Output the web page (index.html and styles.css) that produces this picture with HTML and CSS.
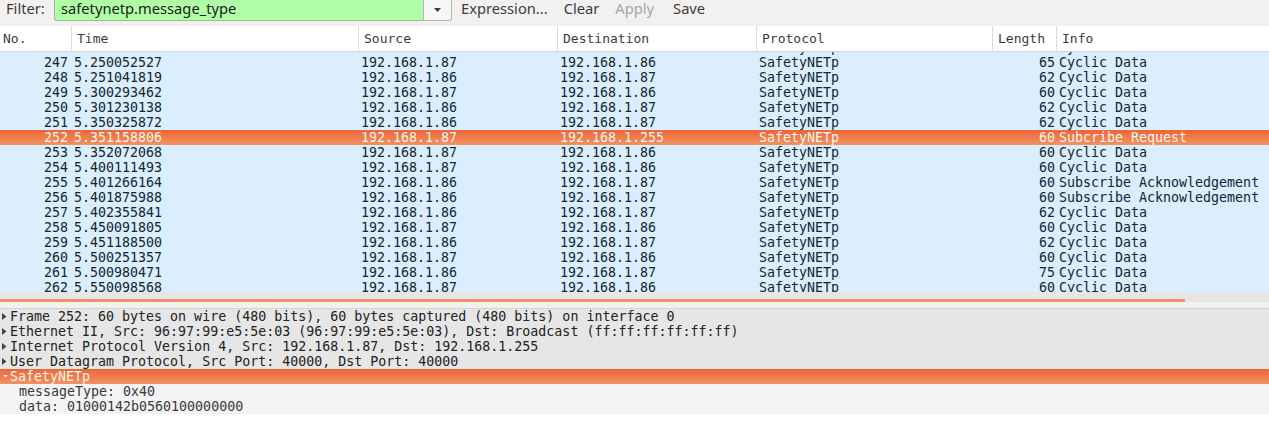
FILE: index.html
```html
<!DOCTYPE html>
<html>
<head>
<meta charset="utf-8">
<link rel="stylesheet" href="styles.css">
</head>
<body>
<div class="app">
  <div class="toolbar">
    <span class="label">Filter:</span>
    <div class="filter">
      <div class="filter-input">safetynetp.message_type</div>
      <div class="filter-drop"><svg width="7" height="4" viewBox="0 0 7 4"><polygon points="0,0 7,0 3.5,4" fill="#3c3c3c"/></svg></div>
    </div>
    <span class="tbtn">Expression...</span>
    <span class="tbtn">Clear</span>
    <span class="tbtn disabled">Apply</span>
    <span class="tbtn save">Save</span>
  </div>

  <div class="plist">
    <div class="phead">
      <div class="hc first">No.</div>
      <div class="hc">Time</div>
      <div class="hc">Source</div>
      <div class="hc">Destination</div>
      <div class="hc">Protocol</div>
      <div class="hc">Length</div>
      <div class="hc last">Info</div>
    </div>
    <div class="pview">
      <div class="prows">
        <div class="row"><span class="num">246</span><span>5.201034417</span><span>192.168.1.86</span><span>192.168.1.87</span><span>SafetyNETp</span><span class="len">62</span><span>Cyclic Data</span></div>
        <div class="row"><span class="num">247</span><span>5.250052527</span><span>192.168.1.87</span><span>192.168.1.86</span><span>SafetyNETp</span><span class="len">65</span><span>Cyclic Data</span></div>
        <div class="row"><span class="num">248</span><span>5.251041819</span><span>192.168.1.86</span><span>192.168.1.87</span><span>SafetyNETp</span><span class="len">62</span><span>Cyclic Data</span></div>
        <div class="row"><span class="num">249</span><span>5.300293462</span><span>192.168.1.87</span><span>192.168.1.86</span><span>SafetyNETp</span><span class="len">60</span><span>Cyclic Data</span></div>
        <div class="row"><span class="num">250</span><span>5.301230138</span><span>192.168.1.86</span><span>192.168.1.87</span><span>SafetyNETp</span><span class="len">62</span><span>Cyclic Data</span></div>
        <div class="row"><span class="num">251</span><span>5.350325872</span><span>192.168.1.86</span><span>192.168.1.87</span><span>SafetyNETp</span><span class="len">62</span><span>Cyclic Data</span></div>
        <div class="row selected"><span class="num">252</span><span>5.351158806</span><span>192.168.1.87</span><span>192.168.1.255</span><span>SafetyNETp</span><span class="len">60</span><span>Subcribe Request</span></div>
        <div class="row"><span class="num">253</span><span>5.352072068</span><span>192.168.1.87</span><span>192.168.1.86</span><span>SafetyNETp</span><span class="len">60</span><span>Cyclic Data</span></div>
        <div class="row"><span class="num">254</span><span>5.400111493</span><span>192.168.1.87</span><span>192.168.1.86</span><span>SafetyNETp</span><span class="len">60</span><span>Cyclic Data</span></div>
        <div class="row"><span class="num">255</span><span>5.401266164</span><span>192.168.1.86</span><span>192.168.1.87</span><span>SafetyNETp</span><span class="len">60</span><span>Subscribe Acknowledgement</span></div>
        <div class="row"><span class="num">256</span><span>5.401875988</span><span>192.168.1.86</span><span>192.168.1.87</span><span>SafetyNETp</span><span class="len">60</span><span>Subscribe Acknowledgement</span></div>
        <div class="row"><span class="num">257</span><span>5.402355841</span><span>192.168.1.86</span><span>192.168.1.87</span><span>SafetyNETp</span><span class="len">62</span><span>Cyclic Data</span></div>
        <div class="row"><span class="num">258</span><span>5.450091805</span><span>192.168.1.87</span><span>192.168.1.86</span><span>SafetyNETp</span><span class="len">60</span><span>Cyclic Data</span></div>
        <div class="row"><span class="num">259</span><span>5.451188500</span><span>192.168.1.86</span><span>192.168.1.87</span><span>SafetyNETp</span><span class="len">62</span><span>Cyclic Data</span></div>
        <div class="row"><span class="num">260</span><span>5.500251357</span><span>192.168.1.87</span><span>192.168.1.86</span><span>SafetyNETp</span><span class="len">60</span><span>Cyclic Data</span></div>
        <div class="row"><span class="num">261</span><span>5.500980471</span><span>192.168.1.86</span><span>192.168.1.87</span><span>SafetyNETp</span><span class="len">75</span><span>Cyclic Data</span></div>
        <div class="row"><span class="num">262</span><span>5.550098568</span><span>192.168.1.87</span><span>192.168.1.86</span><span>SafetyNETp</span><span class="len">60</span><span>Cyclic Data</span></div>
      </div>
    </div>
    <div class="hscroll"><div class="thumb"></div></div>
  </div>

  <div class="splitter"></div>

  <div class="details">
    <div class="drow top"><span class="exp"><svg width="5" height="7" viewBox="0 0 5 7"><polygon points="0,0 4.5,3.5 0,7" fill="#444"/></svg></span><span>Frame 252: 60 bytes on wire (480 bits), 60 bytes captured (480 bits) on interface 0</span></div>
    <div class="drow top"><span class="exp"><svg width="5" height="7" viewBox="0 0 5 7"><polygon points="0,0 4.5,3.5 0,7" fill="#444"/></svg></span><span>Ethernet II, Src: 96:97:99:e5:5e:03 (96:97:99:e5:5e:03), Dst: Broadcast (ff:ff:ff:ff:ff:ff)</span></div>
    <div class="drow top"><span class="exp"><svg width="5" height="7" viewBox="0 0 5 7"><polygon points="0,0 4.5,3.5 0,7" fill="#444"/></svg></span><span>Internet Protocol Version 4, Src: 192.168.1.87, Dst: 192.168.1.255</span></div>
    <div class="drow top"><span class="exp"><svg width="5" height="7" viewBox="0 0 5 7"><polygon points="0,0 4.5,3.5 0,7" fill="#444"/></svg></span><span>User Datagram Protocol, Src Port: 40000, Dst Port: 40000</span></div>
    <div class="drow top selected"><span class="exp"><svg width="5" height="3" viewBox="0 0 5 3"><polygon points="0,0 5,0 2.5,2.5" fill="#fde6d8"/></svg></span><span>SafetyNETp</span></div>
    <div class="drow child"><span>messageType: 0x40</span></div>
    <div class="drow child"><span>data: 01000142b0560100000000</span></div>
  </div>
</div>
</body>
</html>
```

FILE: styles.css
```css
html, body {
  margin: 0;
  padding: 0;
  background: #ffffff;
}

.app {
  width: 1269px;
  display: flex;
  flex-direction: column;
}

/* ---------- filter toolbar ---------- */
.toolbar {
  height: 26px;
  background: #f2f1f0;
  display: flex;
  align-items: flex-start;
  padding-left: 6px;
  font-family: "Noto Sans", "DejaVu Sans", sans-serif;
  font-size: 14.7px;
  line-height: 17px;
  color: #3c3c3c;
}

.label {
  width: 48px;
}

.filter {
  display: flex;
  width: 398px;
  height: 21px;
}

.filter-input {
  flex: 1;
  box-sizing: border-box;
  height: 21px;
  background: #b0ffa6;
  border: 1px solid #98bd90;
  border-top: none;
  border-right: none;
  border-radius: 0 0 0 3px;
  padding-left: 6px;
  color: #1a1a1a;
}

.filter-drop {
  width: 29px;
  height: 21px;
  box-sizing: border-box;
  background: #f7f7f7;
  border: 1px solid #b4b4b4;
  border-top: none;
  border-radius: 0 0 3px 0;
  display: flex;
  align-items: center;
  justify-content: center;
}

.tbtn {
  margin-left: 16px;
}

.filter + .tbtn {
  margin-left: 9px;
}

.tbtn.save {
  margin-left: 19px;
}

.tbtn.disabled {
  color: #a6a6a6;
}

/* ---------- packet list ---------- */
.plist {
  display: flex;
  flex-direction: column;
}

.phead,
.row {
  display: grid;
  grid-template-columns: 72px 287px 199px 199px 236px 64px 1fr;
}

.phead {
  height: 25px;
  background: #ffffff;
  border-bottom: 1px solid #d6d6d6;
  font-family: "DejaVu Sans Mono", monospace;
  font-size: 13px;
  line-height: 25px;
  color: #3c3c3c;
}

.hc {
  padding-left: 5px;
  border-right: 1px solid #dcdcdc;
  white-space: nowrap;
  overflow: hidden;
}

.hc.first {
  padding-left: 3px;
}

.hc.last {
  border-right: none;
}

.pview {
  height: 240px;
  overflow: hidden;
  background: #daeeff;
}

.prows {
  margin-top: -12px;
}

.row {
  height: 15px;
  line-height: 15px;
  font-family: "DejaVu Sans Mono", monospace;
  font-size: 13.3px;
  background: #daeeff;
  color: #12272e;
  white-space: nowrap;
}

.row span {
  padding-left: 2px;
  overflow: hidden;
}

.row .num {
  text-align: right;
  padding-left: 0;
  padding-right: 4px;
}

.row .len {
  text-align: right;
  padding-left: 0;
  padding-right: 2px;
}

.row.selected {
  background: linear-gradient(to bottom, #eb6636, #f39263);
  color: #fff6ee;
}

.hscroll {
  height: 10px;
  background: #e6e6e6;
  display: flex;
  align-items: flex-end;
}

.thumb {
  width: 1185px;
  height: 3px;
  background: #f0916a;
}

.splitter {
  height: 6px;
  background: #f2f1f0;
  border-bottom: 1px solid #d2d2d2;
}

/* ---------- packet details ---------- */
.details {
  font-family: "DejaVu Sans Mono", monospace;
  font-size: 13.3px;
}

.drow {
  height: 15px;
  line-height: 15px;
  display: flex;
  align-items: center;
  white-space: nowrap;
}

.drow.top {
  background: #e6e6e6;
  color: #222222;
}

.drow.child {
  background: #f4f4f4;
  color: #3a3a3a;
  padding-left: 19px;
}

.exp {
  width: 10px;
  display: flex;
  align-items: center;
  padding-left: 2px;
  box-sizing: border-box;
}

.exp svg {
  display: block;
}

.drow.selected {
  background: linear-gradient(to bottom, #eb6636, #f39263);
  color: #fff6ee;
}

.drow.selected .exp {
  padding-left: 3px;
}
```
